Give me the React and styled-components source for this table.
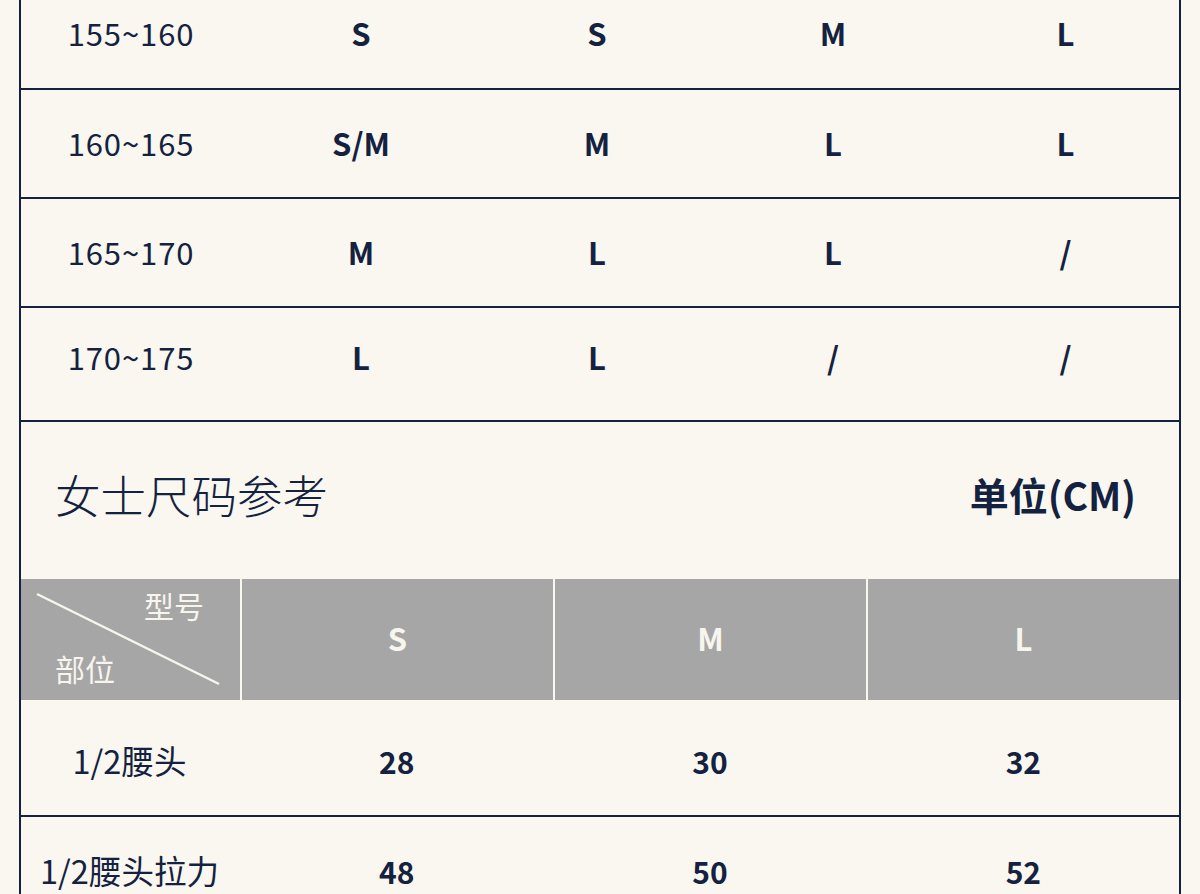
import React from 'react';
import styled, { createGlobalStyle } from 'styled-components';

const NAVY = '#14223f';
const PAPER = '#f9f7f0';
const GREY = '#a6a6a6';

const GlobalStyle = createGlobalStyle`
    html, body {
        margin: 0;
        padding: 0;
        background: ${PAPER};
        overflow: hidden;
    }
    body {
        font-family: "Noto Sans CJK SC", "Noto Sans", sans-serif;
        color: ${NAVY};
    }
`;

const Frame = styled.div`
    margin: -18px 0 0 19px;
    width: 1162px;
    box-sizing: border-box;
    border-left: 2px solid ${NAVY};
    border-right: 2px solid ${NAVY};
`;

const MenRow = styled.div`
    display: grid;
    grid-template-columns: 222px 238px 234px 238px 1fr;
    align-items: center;
    height: ${props => props.height || 107}px;
    padding-bottom: ${props => props.lift || 0}px;
    box-sizing: border-box;
    border-bottom: 2px solid ${NAVY};
    margin-left: -1px;
`;

const Label = styled.div`
    text-align: center;
    font-size: 31px;
    font-weight: 400;
    line-height: 1;
    letter-spacing: 0.9px;
`;

const Size = styled.div`
    text-align: center;
    font-size: 31px;
    font-weight: 700;
    line-height: 1;
`;

const TitleBar = styled.div`
    height: 157px;
    display: flex;
    align-items: center;
    justify-content: space-between;
    padding: 0 43px 12px 34px;
    box-sizing: border-box;
`;

const Title = styled.h2`
    margin: 0;
    font-size: 45.5px;
    font-weight: 300;
    line-height: 1;
`;

const Unit = styled.div`
    font-size: 39px;
    font-weight: 700;
    line-height: 1;
`;

const Grid = styled.div`
    display: grid;
    grid-template-columns: 219px 1fr 1fr 1fr;
    column-gap: 2px;
    align-items: stretch;
`;

const HeadCell = styled.div`
    background: ${GREY};
    height: 121px;
    box-sizing: border-box;
    padding-bottom: 4px;
    display: flex;
    align-items: center;
    justify-content: center;
    color: #f7f5ee;
    font-size: 31px;
    font-weight: 700;
`;

const Corner = styled.div`
    position: relative;
    background: ${GREY};
    height: 121px;
    box-sizing: border-box;
    padding: 11px 36px 17px 34px;
    display: flex;
    flex-direction: column;
    justify-content: space-between;
    color: #f7f5ee;
    font-size: 30px;
    line-height: 1;
`;

const CornerTop = styled.span`
    align-self: flex-end;
`;

const Diagonal = styled.svg`
    position: absolute;
    left: 0;
    top: 0;
`;

const BodyRow = styled(Grid)`
    height: 117px;
    padding: ${props => (props.raised ? '0 0 8px' : '6px 0 0')};
    border-bottom: 2px solid ${NAVY};
    box-sizing: border-box;
    margin-left: -1px;
`;

const BodyCell = styled.div`
    display: flex;
    align-items: center;
    justify-content: center;
    font-size: ${props => (props.bold ? 30 : 32.5)}px;
    font-weight: ${props => (props.bold ? 700 : 400)};
    line-height: 1;
`;

const menRows = [
    ['155~160', 'S', 'S', 'M', 'L'],
    ['160~165', 'S/M', 'M', 'L', 'L'],
    ['165~170', 'M', 'L', 'L', '/'],
    ['170~175', 'L', 'L', '/', '/'],
];

const womenRows = [
    ['1/2腰头', '28', '30', '32'],
    ['1/2腰头拉力', '48', '50', '52'],
];

const App = () => (
    <>
        <GlobalStyle />
        <Frame>
            {menRows.map((row, i) => (
                <MenRow
                    key={row[0]}
                    height={i === 3 ? 114 : i === 0 ? 108 : 109}
                    lift={i === 3 ? 16 : i === 0 ? 5 : 2}
                >
                    <Label>{row[0]}</Label>
                    {row.slice(1).map((s, j) => (
                        <Size key={j}>{s}</Size>
                    ))}
                </MenRow>
            ))}
            <TitleBar>
                <Title>女士尺码参考</Title>
                <Unit>单位(CM)</Unit>
            </TitleBar>
            <Grid>
                <Corner>
                    <Diagonal width="219" height="121">
                        <line x1="16" y1="15" x2="198" y2="105" stroke="#f7f5ee" strokeWidth="2.5" />
                    </Diagonal>
                    <CornerTop>型号</CornerTop>
                    <span>部位</span>
                </Corner>
                <HeadCell>S</HeadCell>
                <HeadCell>M</HeadCell>
                <HeadCell>L</HeadCell>
            </Grid>
            {womenRows.map((row, i) => (
                <BodyRow key={row[0]} raised={i === 1}>
                    <BodyCell>{row[0]}</BodyCell>
                    {row.slice(1).map((v, j) => (
                        <BodyCell bold key={j}>{v}</BodyCell>
                    ))}
                </BodyRow>
            ))}
        </Frame>
    </>
);

export default App;
